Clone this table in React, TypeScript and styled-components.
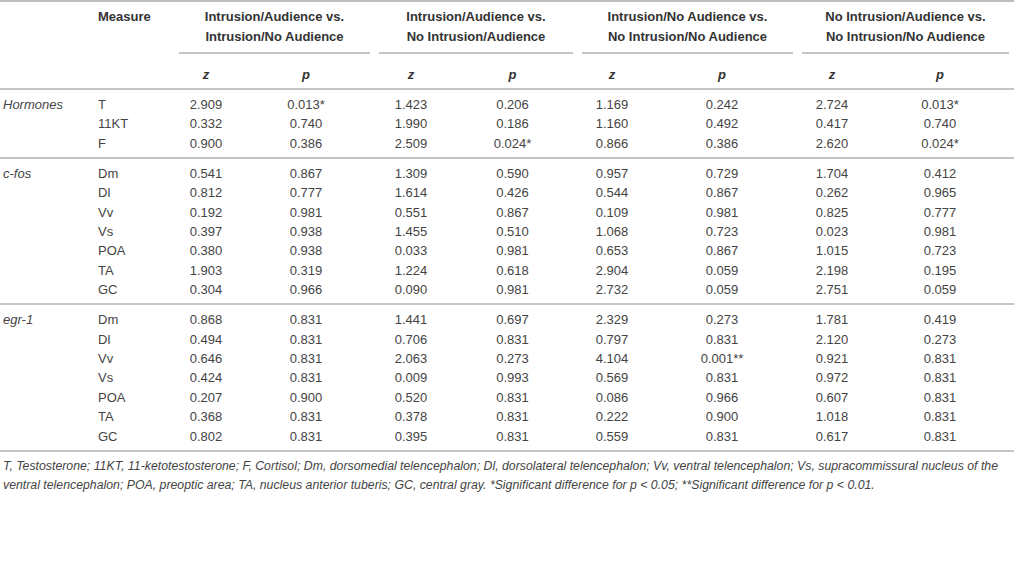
import React from "react";
import styled, { createGlobalStyle } from "styled-components";

const GlobalStyle = createGlobalStyle`
  html, body { margin: 0; padding: 0; background: #ffffff; }
  body { font-family: "Liberation Sans", Arial, Helvetica, sans-serif; color: #444; }
`;

const COLS = "95px 80px 62px 138px 72px 131px 68px 152px 68px 148px";

const Page = styled.div`
  width: 1014px;
  overflow: hidden;
`;

const Header = styled.div`
  display: grid;
  grid-template-columns: ${COLS};
  border-top: 2px solid #bdbdbd;
  border-bottom: 2px solid #c4c4c4;
`;

const MeasureHead = styled.div`
  grid-column: 2;
  padding: 5px 0 0 3px;
  font-size: 13px;
  line-height: 20px;
  font-weight: bold;
  color: #333;
`;

const GroupHead = styled.div<{ $col: number }>`
  grid-column: ${(p) => p.$col} / span 2;
  grid-row: 1;
  padding: 5px 0 0;
  text-align: center;
`;

const GroupTitle = styled.div`
  margin: 0 5px 0 4px;
  padding-bottom: 5px;
  border-bottom: 2px solid #c4c4c4;
  font-size: 13px;
  line-height: 20px;
  font-weight: bold;
  color: #333;
`;

const StatHead = styled.div<{ $col: number }>`
  grid-column: ${(p) => p.$col};
  grid-row: 2;
  padding: 11px 0 3px;
  text-align: center;
  font-size: 13px;
  line-height: 20px;
  font-weight: bold;
  font-style: italic;
  color: #333;
`;

const Section = styled.div`
  display: grid;
  grid-template-columns: ${COLS};
  padding: 5px 0 4px;
  border-bottom: 2px solid #c4c4c4;
  font-size: 13px;
  line-height: 19.35px;
`;

const GroupLabel = styled.div`
  padding-left: 3px;
  font-style: italic;
  color: #444;
`;

const MeasureCell = styled.div`
  padding-left: 3px;
  color: #444;
`;

const ValueCell = styled.div`
  text-align: center;
  color: #444;
`;

const Footnote = styled.p`
  margin: 0;
  padding: 5px 0 0 3px;
  font-size: 12.3px;
  line-height: 19px;
  font-style: italic;
  color: #444;
`;

type Row = { m: string; v: string[] };
type Group = { label: string; rows: Row[] };

const groups: Group[] = [
  {
    label: "Hormones",
    rows: [
      { m: "T", v: ["2.909", "0.013*", "1.423", "0.206", "1.169", "0.242", "2.724", "0.013*"] },
      { m: "11KT", v: ["0.332", "0.740", "1.990", "0.186", "1.160", "0.492", "0.417", "0.740"] },
      { m: "F", v: ["0.900", "0.386", "2.509", "0.024*", "0.866", "0.386", "2.620", "0.024*"] },
    ],
  },
  {
    label: "c-fos",
    rows: [
      { m: "Dm", v: ["0.541", "0.867", "1.309", "0.590", "0.957", "0.729", "1.704", "0.412"] },
      { m: "Dl", v: ["0.812", "0.777", "1.614", "0.426", "0.544", "0.867", "0.262", "0.965"] },
      { m: "Vv", v: ["0.192", "0.981", "0.551", "0.867", "0.109", "0.981", "0.825", "0.777"] },
      { m: "Vs", v: ["0.397", "0.938", "1.455", "0.510", "1.068", "0.723", "0.023", "0.981"] },
      { m: "POA", v: ["0.380", "0.938", "0.033", "0.981", "0.653", "0.867", "1.015", "0.723"] },
      { m: "TA", v: ["1.903", "0.319", "1.224", "0.618", "2.904", "0.059", "2.198", "0.195"] },
      { m: "GC", v: ["0.304", "0.966", "0.090", "0.981", "2.732", "0.059", "2.751", "0.059"] },
    ],
  },
  {
    label: "egr-1",
    rows: [
      { m: "Dm", v: ["0.868", "0.831", "1.441", "0.697", "2.329", "0.273", "1.781", "0.419"] },
      { m: "Dl", v: ["0.494", "0.831", "0.706", "0.831", "0.797", "0.831", "2.120", "0.273"] },
      { m: "Vv", v: ["0.646", "0.831", "2.063", "0.273", "4.104", "0.001**", "0.921", "0.831"] },
      { m: "Vs", v: ["0.424", "0.831", "0.009", "0.993", "0.569", "0.831", "0.972", "0.831"] },
      { m: "POA", v: ["0.207", "0.900", "0.520", "0.831", "0.086", "0.966", "0.607", "0.831"] },
      { m: "TA", v: ["0.368", "0.831", "0.378", "0.831", "0.222", "0.900", "1.018", "0.831"] },
      { m: "GC", v: ["0.802", "0.831", "0.395", "0.831", "0.559", "0.831", "0.617", "0.831"] },
    ],
  },
];

const comparisons: [string, string][] = [
  ["Intrusion/Audience vs.", "Intrusion/No Audience"],
  ["Intrusion/Audience vs.", "No Intrusion/Audience"],
  ["Intrusion/No Audience vs.", "No Intrusion/No Audience"],
  ["No Intrusion/Audience vs.", "No Intrusion/No Audience"],
];

export default function App() {
  return (
    <>
      <GlobalStyle />
      <Page>
        <Header>
          <MeasureHead>Measure</MeasureHead>
          {comparisons.map((c, i) => (
            <GroupHead key={i} $col={3 + i * 2}>
              <GroupTitle>
                {c[0]}
                <br />
                {c[1]}
              </GroupTitle>
            </GroupHead>
          ))}
          {comparisons.map((_, i) => (
            <React.Fragment key={i}>
              <StatHead $col={3 + i * 2}>z</StatHead>
              <StatHead $col={4 + i * 2}>p</StatHead>
            </React.Fragment>
          ))}
        </Header>
        {groups.map((g) => (
          <Section key={g.label}>
            {g.rows.map((r, ri) => (
              <React.Fragment key={r.m}>
                <GroupLabel>{ri === 0 ? g.label : ""}</GroupLabel>
                <MeasureCell>{r.m}</MeasureCell>
                {r.v.map((v, vi) => (
                  <ValueCell key={vi}>{v}</ValueCell>
                ))}
              </React.Fragment>
            ))}
          </Section>
        ))}
        <Footnote>
          T, Testosterone; 11KT, 11-ketotestosterone; F, Cortisol; Dm, dorsomedial telencephalon; Dl,
          dorsolateral telencephalon; Vv, ventral telencephalon; Vs, supracommissural nucleus of the
          ventral telencephalon; POA, preoptic area; TA, nucleus anterior tuberis; GC, central gray.
          *Significant difference for p &lt; 0.05; **Significant difference for p &lt; 0.01.
        </Footnote>
      </Page>
    </>
  );
}
